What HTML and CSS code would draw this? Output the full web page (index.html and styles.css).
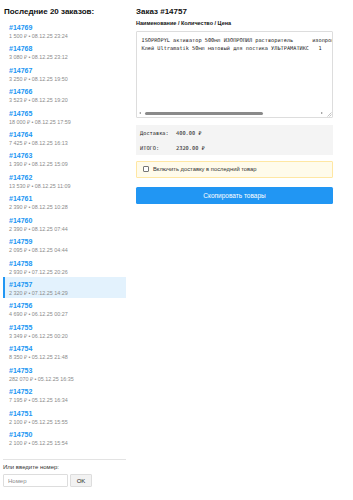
FILE: index.html
```html
<!DOCTYPE html>
<html lang="ru">
<head>
<meta charset="utf-8">
<title>Заказы</title>
<link rel="stylesheet" href="styles.css">
</head>
<body>
<div class="page">
  <aside class="sidebar">
    <h2 class="sidebar-title">Последние 20 заказов:</h2>
    <ul class="order-list">
      <li class="order-item"><div class="order-num">#14769</div><div class="order-meta">1 500 ₽ • 08.12.25 23:24</div></li>
      <li class="order-item"><div class="order-num">#14768</div><div class="order-meta">3 080 ₽ • 08.12.25 23:12</div></li>
      <li class="order-item"><div class="order-num">#14767</div><div class="order-meta">3 250 ₽ • 08.12.25 19:50</div></li>
      <li class="order-item"><div class="order-num">#14766</div><div class="order-meta">3 523 ₽ • 08.12.25 19:20</div></li>
      <li class="order-item"><div class="order-num">#14765</div><div class="order-meta">18 000 ₽ • 08.12.25 17:59</div></li>
      <li class="order-item"><div class="order-num">#14764</div><div class="order-meta">7 425 ₽ • 08.12.25 16:13</div></li>
      <li class="order-item"><div class="order-num">#14763</div><div class="order-meta">1 390 ₽ • 08.12.25 15:09</div></li>
      <li class="order-item"><div class="order-num">#14762</div><div class="order-meta">13 530 ₽ • 08.12.25 11:09</div></li>
      <li class="order-item"><div class="order-num">#14761</div><div class="order-meta">2 390 ₽ • 08.12.25 10:28</div></li>
      <li class="order-item"><div class="order-num">#14760</div><div class="order-meta">2 390 ₽ • 08.12.25 07:44</div></li>
      <li class="order-item"><div class="order-num">#14759</div><div class="order-meta">2 095 ₽ • 08.12.25 04:44</div></li>
      <li class="order-item"><div class="order-num">#14758</div><div class="order-meta">2 930 ₽ • 07.12.25 20:26</div></li>
      <li class="order-item is-active"><div class="order-num">#14757</div><div class="order-meta">2 320 ₽ • 07.12.25 14:29</div></li>
      <li class="order-item"><div class="order-num">#14756</div><div class="order-meta">4 690 ₽ • 06.12.25 00:27</div></li>
      <li class="order-item"><div class="order-num">#14755</div><div class="order-meta">3 349 ₽ • 06.12.25 00:20</div></li>
      <li class="order-item"><div class="order-num">#14754</div><div class="order-meta">8 350 ₽ • 05.12.25 21:48</div></li>
      <li class="order-item"><div class="order-num">#14753</div><div class="order-meta">282 070 ₽ • 05.12.25 16:35</div></li>
      <li class="order-item"><div class="order-num">#14752</div><div class="order-meta">7 195 ₽ • 05.12.25 16:34</div></li>
      <li class="order-item"><div class="order-num">#14751</div><div class="order-meta">2 100 ₽ • 05.12.25 15:55</div></li>
      <li class="order-item"><div class="order-num">#14750</div><div class="order-meta">2 100 ₽ • 05.12.25 15:54</div></li>
    </ul>
    <div class="manual">
      <label class="manual-label" for="num">Или введите номер:</label>
      <div class="manual-row">
        <input id="num" class="manual-input" type="text" placeholder="Номер">
        <button class="manual-btn" type="button">OK</button>
      </div>
    </div>
  </aside>

  <main class="order">
    <h2 class="order-title">Заказ #14757</h2>
    <div class="order-sub">Наименование / Количество / Цена</div>
    <div class="text-wrap">
      <textarea class="order-text" readonly wrap="off">ISOPROPYL активатор 500мл ИЗОПРОПИЛ растворитель      изопропиловый спирт	1	1920
Клей Ultramatik 50мл матовый для постика УЛЬТРАМАТИКС	1	0</textarea>
      <div class="hscroll" aria-hidden="true">
        <span class="arrow arrow-left"></span>
        <span class="track"><span class="thumb"></span></span>
        <span class="arrow arrow-right"></span>
        <svg class="grip" width="6" height="6" viewBox="0 0 6 6"><path d="M5.5 1.5 L1.5 5.5 M5.5 3.5 L3.5 5.5" stroke="#9a9a9a" stroke-width="0.6" fill="none"/></svg>
      </div>
    </div>
    <div class="totals">
      <div class="totals-row"><span class="totals-label">Доставка:</span><span>400.00 ₽</span></div>
      <div class="totals-row"><span class="totals-label">ИТОГО:</span><span>2320.00 ₽</span></div>
    </div>
    <label class="delivery">
      <input class="delivery-check" type="checkbox">
      <span>Включить доставку в последний товар</span>
    </label>
    <button class="copy-btn" type="button">Скопировать товары</button>
  </main>
</div>
</body>
</html>
```
FILE: styles.css
```css
* { box-sizing: border-box; }

body {
  margin: 0;
  font-family: "Liberation Sans", Arial, sans-serif;
  color: #222;
  background: #fff;
}

.page {
  display: flex;
  align-items: flex-start;
  gap: 10px;
  padding: 6px 0 0 3px;
}

.sidebar {
  width: 123px;
  flex: none;
}

.sidebar-title {
  margin: 0 0 2.3px 1px;
  font-size: 8px;
  line-height: 11px;
  font-weight: bold;
  color: #111;
}

.order-list {
  list-style: none;
  margin: 0;
  padding: 0;
}

.order-item {
  padding: 3.5px 6px 0.95px 4px;
  border-left: 2px solid transparent;
}

.order-item.is-active {
  background: #e3f2fd;
  border-left-color: #2196f3;
}

.order-num {
  font-size: 7px;
  line-height: 9px;
  font-weight: bold;
  color: #2196f3;
}

.order-meta {
  font-size: 5.4px;
  line-height: 8px;
  color: #8a8a8a;
}

.manual {
  margin-top: 11px;
  padding-top: 3px;
  border-top: 1px solid #e3e3e3;
}

.manual-label {
  display: block;
  font-size: 6px;
  line-height: 8px;
  color: #333;
}

.manual-row {
  display: flex;
  gap: 2px;
  margin-top: 3px;
}

.manual-input {
  width: 65px;
  height: 13px;
  margin: 0;
  padding: 0 4px;
  border: 1px solid #ddd;
  border-radius: 1px;
  font-family: inherit;
  font-size: 6px;
  color: #333;
}

.manual-input::placeholder { color: #8c8c8c; }

.manual-btn {
  width: 22px;
  height: 13px;
  margin: 0;
  padding: 0;
  border: 1px solid #ddd;
  border-radius: 1px;
  background: #f2f2f2;
  font-family: inherit;
  font-size: 6px;
  color: #222;
}

.order {
  width: 197px;
  flex: none;
}

.order-title {
  margin: 0;
  font-size: 8px;
  line-height: 11px;
  font-weight: bold;
  color: #111;
}

.order-sub {
  margin-top: 3px;
  font-size: 5.5px;
  line-height: 7px;
  font-weight: bold;
  color: #111;
}

.text-wrap {
  position: relative;
  margin-top: 4px;
}

.order-text {
  display: block;
  width: 197px;
  height: 87px;
  margin: 0;
  padding: 4px 4.5px;
  border: 1px solid #ddd;
  border-radius: 1px;
  font-family: "DejaVu Sans Mono", "Liberation Mono", monospace;
  font-size: 5.25px;
  line-height: 8px;
  color: #222;
  white-space: pre;
  overflow: hidden;
  tab-size: 8;
  resize: none;
}

.hscroll {
  position: absolute;
  left: 1px;
  right: 1px;
  bottom: 1px;
  height: 8px;
  display: flex;
  align-items: center;
  background: #fff;
}

.arrow {
  width: 0;
  height: 0;
  border-top: 1.5px solid transparent;
  border-bottom: 1.5px solid transparent;
  flex: none;
}

.arrow-left {
  margin-left: 2px;
  border-right: 2px solid #8a8a8a;
}

.arrow-right {
  margin-right: 3px;
  border-left: 2px solid #8a8a8a;
}

.track {
  flex: 1;
  display: flex;
  padding: 0 4px;
}

.thumb {
  width: 118px;
  height: 3px;
  border-radius: 2px;
  background: #8a8a8a;
}

.grip {
  flex: none;
  align-self: flex-end;
}

.totals {
  margin-top: 7px;
  padding: 5px 4px 3px;
  background: #f4f4f4;
  font-family: "DejaVu Sans Mono", "Liberation Mono", monospace;
  font-size: 5.3px;
  color: #222;
  display: flex;
  flex-direction: column;
  gap: 7.5px;
}

.totals-row {
  display: flex;
  line-height: 7px;
}

.totals-label { width: 36px; }

.delivery {
  display: flex;
  align-items: center;
  gap: 4px;
  margin-top: 6px;
  height: 17px;
  padding: 0 6px;
  border: 1px solid #ffe7a3;
  border-radius: 1px;
  background: #fffbeb;
  font-size: 5.8px;
  color: #333;
}

.delivery-check {
  appearance: none;
  -webkit-appearance: none;
  width: 6px;
  height: 6px;
  margin: 0;
  border: 0.8px solid #767676;
  border-radius: 1px;
  background: #fff;
  flex: none;
}

.copy-btn {
  display: block;
  width: 100%;
  height: 17px;
  margin-top: 9px;
  padding: 0;
  border: none;
  border-radius: 1.5px;
  background: #2196f3;
  color: #fff;
  font-family: inherit;
  font-size: 6.5px;
}
```
